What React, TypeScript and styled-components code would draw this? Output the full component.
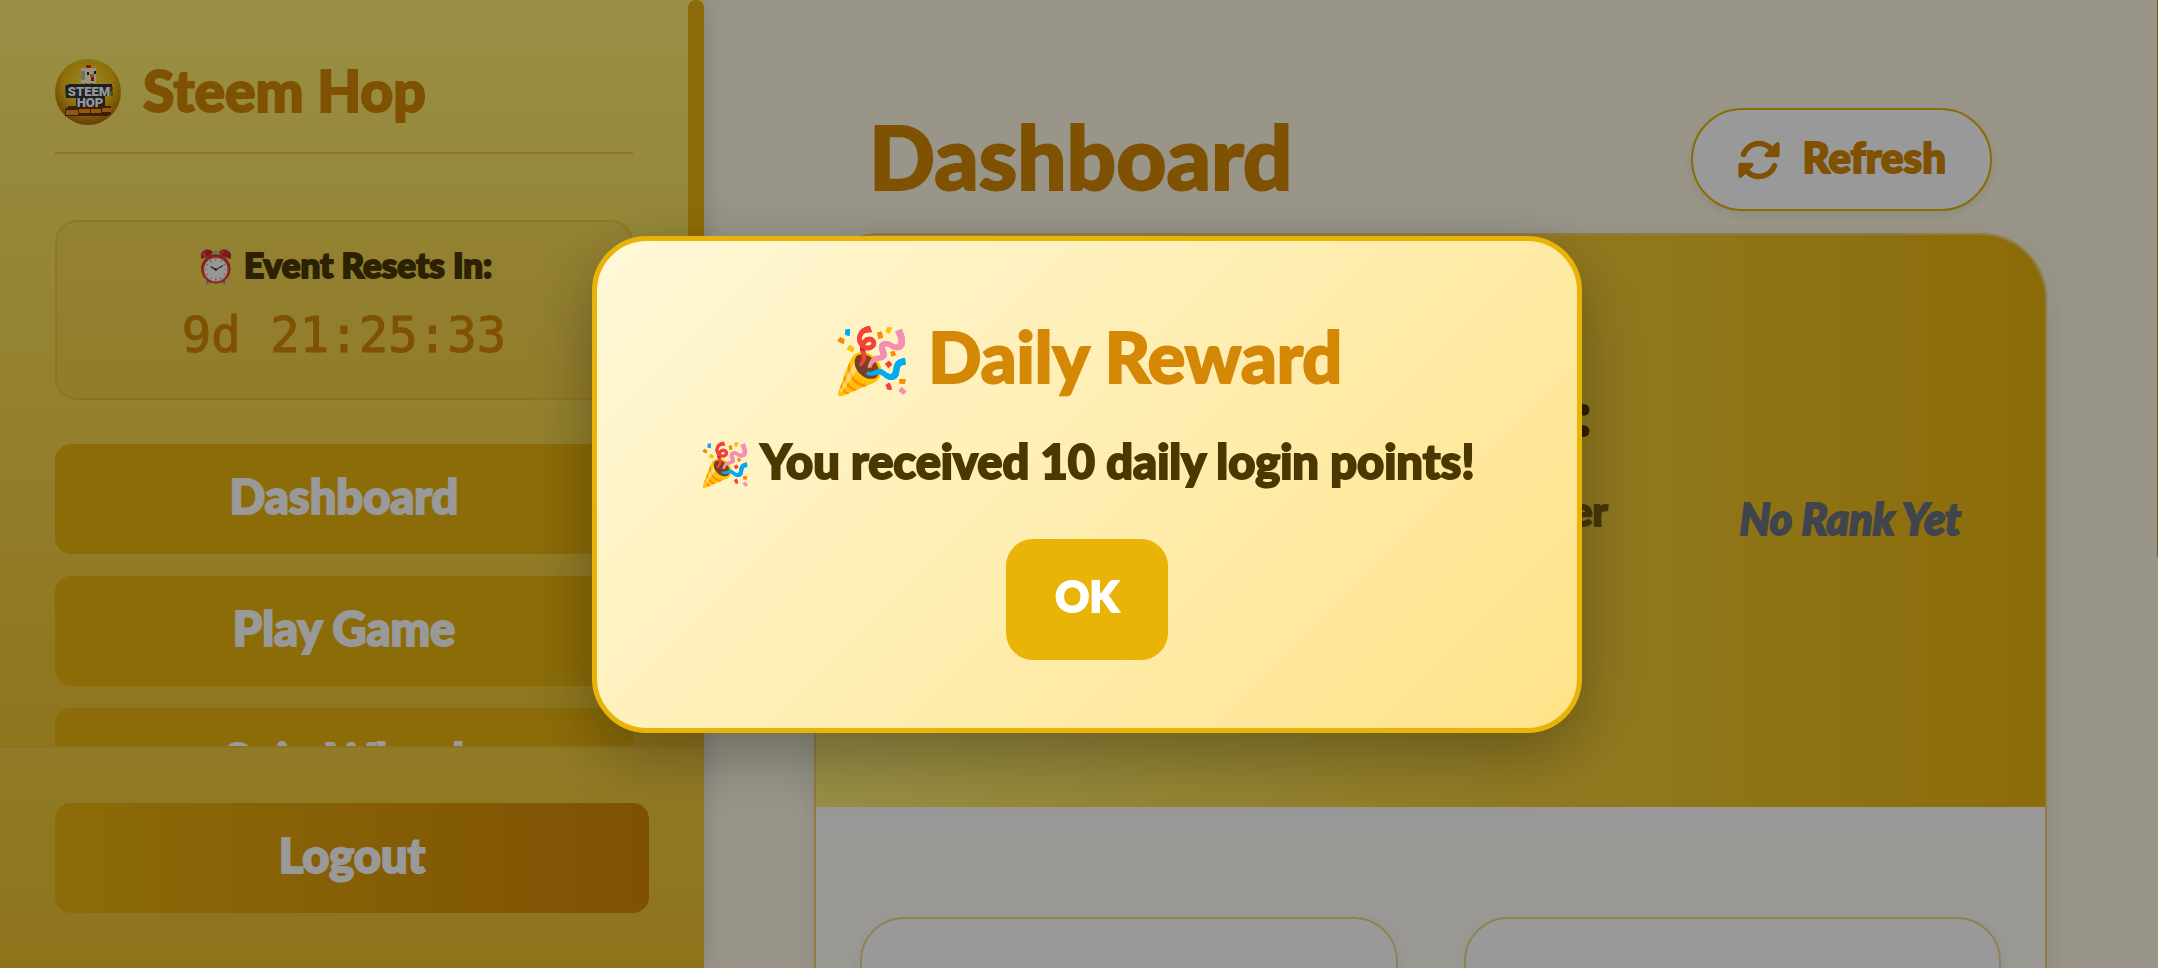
import React from "react";
import styled, { createGlobalStyle } from "styled-components";
import { FaRotate } from "react-icons/fa6";

const GlobalStyle = createGlobalStyle`
  *, *::before, *::after { box-sizing: border-box; }
  body {
    margin: 0;
    overflow: hidden;
    font-family: Lato, "Noto Sans", sans-serif;
    font-weight: 900;
    color: #4a3800;
    -webkit-text-stroke: 2px currentColor;
    stroke-linejoin: round;
  }
  h1, h2, h3, p { margin: 0; font-weight: 900; }
  button { font: inherit; border: 0; cursor: pointer; }
`;

const Shell = styled.div`
  display: flex;
  height: 100vh;
  background: #fffae4;
`;

const Sidebar = styled.aside`
  flex: 0 0 704px;
  display: flex;
  flex-direction: column;
  box-shadow: 4px 0 20px rgba(60, 40, 80, 0.15);
  z-index: 1;
`;

const SidebarScroll = styled.div`
  flex: 1;
  min-height: 0;
  display: flex;
  overflow: hidden;
  background: linear-gradient(180deg, #ffee73, #eec32f);
`;

const SidebarContent = styled.div`
  flex: 1;
  padding: 55px 55px 0;
`;

const SidebarTrack = styled.div`
  width: 16px;
`;

const SidebarThumb = styled.div`
  height: 66%;
  border-radius: 8px;
  background: #e9b40e;
`;

const Brand = styled.div`
  display: flex;
  align-items: center;
  gap: 22px;
  padding-bottom: 23px;
  margin-bottom: 66px;
  border-bottom: 2px solid rgba(212, 136, 6, 0.4);
`;

const BrandName = styled.h2`
  padding-bottom: 4px;
  font-size: 57px;
  line-height: 70px;
  color: #d48806;
`;

const EventBox = styled.section`
  padding: 18px 22px 24px;
  margin-bottom: 44px;
  border: 2px solid rgba(212, 136, 6, 0.22);
  border-radius: 22px;
  background: rgba(212, 150, 6, 0.1);
  text-align: center;
`;

const EventLabel = styled.h3`
  font-size: 35px;
  line-height: 48px;
`;

const EventTime = styled.p`
  margin-top: 10px;
  font-family: "DejaVu Sans Mono", monospace;
  font-weight: 400;
  font-size: 49px;
  line-height: 76px;
  color: #d48806;
  -webkit-text-stroke-width: 1px;
`;

const Emoji = styled.span<{ $size: number }>`
  font-size: ${(p) => p.$size}px;
  line-height: 1;
`;

const Nav = styled.nav`
  display: flex;
  flex-direction: column;
  gap: 22px;
`;

const SideButton = styled.button<{ $accent?: boolean }>`
  width: 100%;
  height: 110px;
  padding: 0 0 6px;
  flex-shrink: 0;
  border-radius: 16px;
  color: #fff;
  font-size: 47px;
  background: ${(p) => (p.$accent ? "linear-gradient(90deg, #e9b40e, #d48806)" : "#e9b40e")};
`;

const SidebarFooter = styled.div`
  padding: 55px;
  border-top: 2px solid #edc136;
  background: linear-gradient(180deg, #f2cd40, #eec02e);
`;

const Main = styled.main`
  flex: 1;
  min-width: 0;
  padding: 108px 110px 0;
`;

const PageHeader = styled.header`
  display: flex;
  justify-content: space-between;
  align-items: center;
  padding: 0 55px;
  margin-bottom: 22px;
`;

const PageTitle = styled.h1`
  padding-bottom: 6px;
  font-size: 87px;
  line-height: 96px;
  color: #d48806;
`;

const RefreshButton = styled.button`
  display: flex;
  align-items: center;
  gap: 22px;
  height: 103px;
  padding: 0 44px;
  border: 2px solid #eab308;
  border-radius: 52px;
  background: #fff;
  color: #d48806;
  font-size: 42px;
  box-shadow: 0 4px 10px rgba(0, 0, 0, 0.08);
`;

const RefreshLabel = styled.span`
  padding-bottom: 6px;
`;

const Card = styled.section`
  height: 1100px;
  border: 2px solid #f0cf70;
  border-radius: 66px;
  overflow: hidden;
  background: linear-gradient(180deg, #fff 40%, #fffbea);
  box-shadow: 0 8px 30px rgba(0, 0, 0, 0.08);
`;

const Hero = styled.div`
  display: flex;
  justify-content: flex-end;
  align-items: center;
  gap: 132px;
  height: 572px;
  padding: 0 84px;
  background: linear-gradient(90deg, #fdee75, #e9b40e);
`;

const HeroText = styled.div`
  align-self: flex-start;
  padding-top: 138px;
  text-align: right;
`;

const HeroTitle = styled.h2`
  padding-right: 16px;
  margin-bottom: 28px;
  font-size: 60px;
  line-height: 80px;
`;

const HeroName = styled.p`
  font-size: 40px;
  line-height: 60px;
  color: #7a5c10;
`;

const Rank = styled.p`
  padding-bottom: 4px;
  font-size: 43px;
  line-height: 60px;
  font-style: italic;
  color: #6b7280;
`;

const Tiles = styled.div`
  display: grid;
  grid-template-columns: 1fr 1fr;
  gap: 66px;
  padding: 110px 44px;
`;

const Tile = styled.div`
  height: 300px;
  border: 2px solid #f0d785;
  border-radius: 44px;
  background: #fff;
  box-shadow: 0 4px 14px rgba(0, 0, 0, 0.05);
`;

const PageTrack = styled.div`
  width: 1px;
`;

const PageThumb = styled.div`
  height: 557px;
  background: #c99a10;
`;

const Overlay = styled.div`
  position: fixed;
  inset: 0;
  z-index: 10;
  display: flex;
  align-items: center;
  justify-content: center;
  padding-left: 16px;
  background: rgba(0, 0, 0, 0.4);
`;

const Modal = styled.div`
  display: flex;
  flex-direction: column;
  align-items: center;
  width: 990px;
  max-width: 90%;
  padding: 68px 22px;
  border: 5px solid #eab308;
  border-radius: 55px;
  background: linear-gradient(135deg, #fff8d8, #ffe389);
  box-shadow: 0 22px 66px rgba(0, 0, 0, 0.3);
`;

const ModalTitle = styled.h2`
  margin-bottom: 28px;
  font-size: 70px;
  line-height: 94px;
  color: #d48806;
`;

const ModalText = styled.p`
  margin-bottom: 48px;
  font-size: 47px;
  line-height: 60px;
`;

const OkButton = styled.button`
  width: 162px;
  height: 121px;
  padding: 0 0 6px;
  border-radius: 27px;
  background: #eab308;
  color: #fff;
  font-size: 42px;
`;

function Logo() {
  return (
    <svg width="66" height="66" viewBox="0 0 66 66" aria-hidden="true">
      <defs>
        <radialGradient id="ball" cx="50%" cy="38%" r="62%">
          <stop offset="0" stopColor="#ffe84a" />
          <stop offset="0.6" stopColor="#efbd12" />
          <stop offset="1" stopColor="#a8690c" />
        </radialGradient>
      </defs>
      <circle cx="33" cy="33" r="33" fill="url(#ball)" />
      <path d="M31 6h5v4h-5z" fill="#d8301f" />
      <path d="M26 9h15v15H26z" fill="#fff3cf" />
      <path d="M26 12h4v9h-4z" fill="#c9bd96" />
      <path d="M32 13h2v3h-2zM39 12h2v3h-2z" fill="#222" />
      <path d="M35 15h4v3h-4z" fill="#f08b18" />
      <path d="M36 18h3v4h-3z" fill="#c22a1d" />
      <path d="M30 24h2v3h-2zM36 24h2v3h-2z" fill="#f08b18" />
      <path d="M10 27l4-2h43v12h-7v12H21V39H11z" fill="#33363a" />
      <path d="M10 50l4-3h42v8l-4 2H10z" fill="#6d3108" />
      <path d="M11 51h12v5H11zM24 50h11v4H24zM36 50h10v4H36zM47 49h9v4h-9z" fill="#f0951f" />
      <path d="M55 28h3v3h-3z" fill="#d8301f" />
      <path d="M55 32h3v5h-3z" fill="#4aa53a" />
      <g fill="#fff" fontFamily="Roboto, sans-serif" fontWeight="900" textAnchor="middle">
        <text x="34" y="37" fontSize="13">STEEM</text>
        <text x="35" y="48" fontSize="13">HOP</text>
      </g>
    </svg>
  );
}

const pages = ["Dashboard", "Play Game", "Spin Wheel"];

export default function App() {
  return (
    <>
      <GlobalStyle />
      <Shell>
        <Sidebar>
          <SidebarScroll>
            <SidebarContent>
              <Brand>
                <Logo />
                <BrandName>Steem Hop</BrandName>
              </Brand>
              <EventBox>
                <EventLabel>
                  <Emoji $size={32}>⏰</Emoji> Event Resets In:
                </EventLabel>
                <EventTime>9d 21:25:33</EventTime>
              </EventBox>
              <Nav>
                {pages.map((page) => (
                  <SideButton key={page}>{page}</SideButton>
                ))}
              </Nav>
            </SidebarContent>
            <SidebarTrack>
              <SidebarThumb />
            </SidebarTrack>
          </SidebarScroll>
          <SidebarFooter>
            <SideButton $accent>Logout</SideButton>
          </SidebarFooter>
        </Sidebar>
        <Main>
          <PageHeader>
            <PageTitle>Dashboard</PageTitle>
            <RefreshButton>
              <FaRotate size={44} />
              <RefreshLabel>Refresh</RefreshLabel>
            </RefreshButton>
          </PageHeader>
          <Card>
            <Hero>
              <HeroText>
                <HeroTitle>Rank:</HeroTitle>
                <HeroName>Player</HeroName>
              </HeroText>
              <Rank>No Rank Yet</Rank>
            </Hero>
            <Tiles>
              <Tile />
              <Tile />
            </Tiles>
          </Card>
        </Main>
        <PageTrack>
          <PageThumb />
        </PageTrack>
      </Shell>
      <Overlay>
        <Modal role="dialog" aria-modal="true" aria-labelledby="reward-title">
          <ModalTitle id="reward-title">
            <Emoji $size={64}>🎉</Emoji> Daily Reward
          </ModalTitle>
          <ModalText>
            <Emoji $size={42}>🎉</Emoji> You received 10 daily login points!
          </ModalText>
          <OkButton>OK</OkButton>
        </Modal>
      </Overlay>
    </>
  );
}
